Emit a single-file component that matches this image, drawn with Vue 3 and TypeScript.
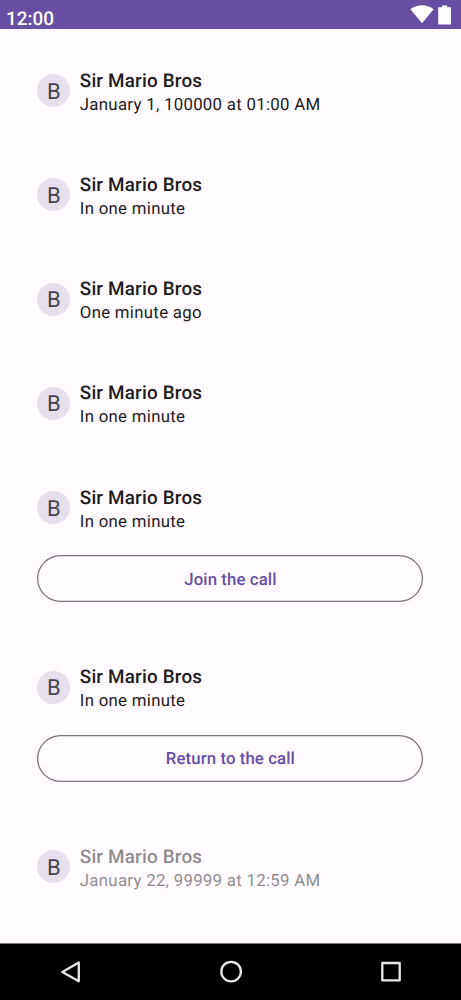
<script setup lang="ts">
interface Entry {
  name: string
  time: string
  action?: string
  muted?: boolean
}

const entries: Entry[] = [
  { name: 'Sir Mario Bros', time: 'January 1, 100000 at 01:00 AM' },
  { name: 'Sir Mario Bros', time: 'In one minute' },
  { name: 'Sir Mario Bros', time: 'One minute ago' },
  { name: 'Sir Mario Bros', time: 'In one minute' },
  { name: 'Sir Mario Bros', time: 'In one minute', action: 'Join the call' },
  { name: 'Sir Mario Bros', time: 'In one minute', action: 'Return to the call' },
  { name: 'Sir Mario Bros', time: 'January 22, 99999 at 12:59 AM', muted: true },
]
</script>

<template>
  <div class="screen">
    <header class="status">
      <span class="clock">12:00</span>
      <svg class="status-icons" width="44" height="29" viewBox="0 0 44 29">
        <path d="M.4 9.2C7.3 3.8 16.8 3.8 23.6 9.2L12 23.3Z" fill="#fff" />
        <path d="M28.2 7.3h3.8V5.4h5.2v1.9H41v17.2H28.2Z" fill="#fff" />
      </svg>
    </header>
    <main class="list">
      <section v-for="(e, i) in entries" :key="i" class="item">
        <div class="row">
          <div class="avatar"><span>B</span></div>
          <div class="texts" :class="{ muted: e.muted }">
            <div class="name">{{ e.name }}</div>
            <div class="time">{{ e.time }}</div>
          </div>
        </div>
        <button v-if="e.action" class="action">{{ e.action }}</button>
      </section>
    </main>
    <nav class="nav">
      <svg viewBox="0 0 28 28"><path d="M22.8 4.5v18.8L6.4 13.9Z" /></svg>
      <svg viewBox="0 0 28 28"><circle cx="14.1" cy="13.6" r="9.8" /></svg>
      <svg viewBox="0 0 28 28"><rect x="5.3" y="5" width="17.4" height="17.4" /></svg>
    </nav>
  </div>
</template>

<style>
body { margin: 0; }
</style>

<style scoped>
.screen {
  width: 461px;
  height: 1000px;
  display: flex;
  flex-direction: column;
  overflow: hidden;
  background: #fffbff;
  color: #1c1b1e;
  font-family: Roboto, sans-serif;
  text-rendering: geometricPrecision;
}
.status {
  height: 29px;
  flex: none;
  display: flex;
  justify-content: space-between;
  background: #6750a4;
  color: #fff;
}
.clock {
  padding: 8px 0 0 6px;
  font-size: 18.9px;
  line-height: 22px;
  font-weight: 500;
}
.status-icons { margin-right: 7px; }
.list { flex: 1; padding: 0 37.4px; }
.item { padding-top: 37.7px; padding-bottom: 18.55px; }
.row { display: flex; align-items: center; height: 48px; }
.avatar {
  width: 33px;
  height: 33px;
  flex: none;
  display: flex;
  align-items: center;
  justify-content: center;
  border-radius: 50%;
  background: #e6e0ec;
  color: #48454e;
  font-size: 22px;
}
.avatar span { padding-top: 3px; }
.texts { padding-top: 4.2px; margin-left: 9.4px; white-space: nowrap; }
.muted { opacity: .5; }
.name { font-size: 18.85px; line-height: 24px; font-weight: 500; letter-spacing: .19px; }
.time { font-size: 16.8px; line-height: 24px; letter-spacing: .3px; }
.action {
  display: block;
  width: 386px;
  height: 47px;
  margin: 23.4px 0 5px;
  padding: 2px 0 0;
  border: 0;
  box-shadow: inset 0 0 0 1.25px #79747e;
  border-radius: 24px;
  background: transparent;
  color: #6750a4;
  font: 500 16.8px/24px Roboto, sans-serif;
  letter-spacing: .09px;
  text-rendering: geometricPrecision;
}
.nav {
  box-sizing: border-box;
  height: 57px;
  flex: none;
  display: flex;
  justify-content: space-between;
  align-items: center;
  padding: 0 56px;
  border-top: 1px solid #777579;
  background: #000;
}
.nav svg { width: 28px; height: 28px; fill: none; stroke: #e8e8e8; stroke-width: 2.3; stroke-linejoin: round; }
</style>
